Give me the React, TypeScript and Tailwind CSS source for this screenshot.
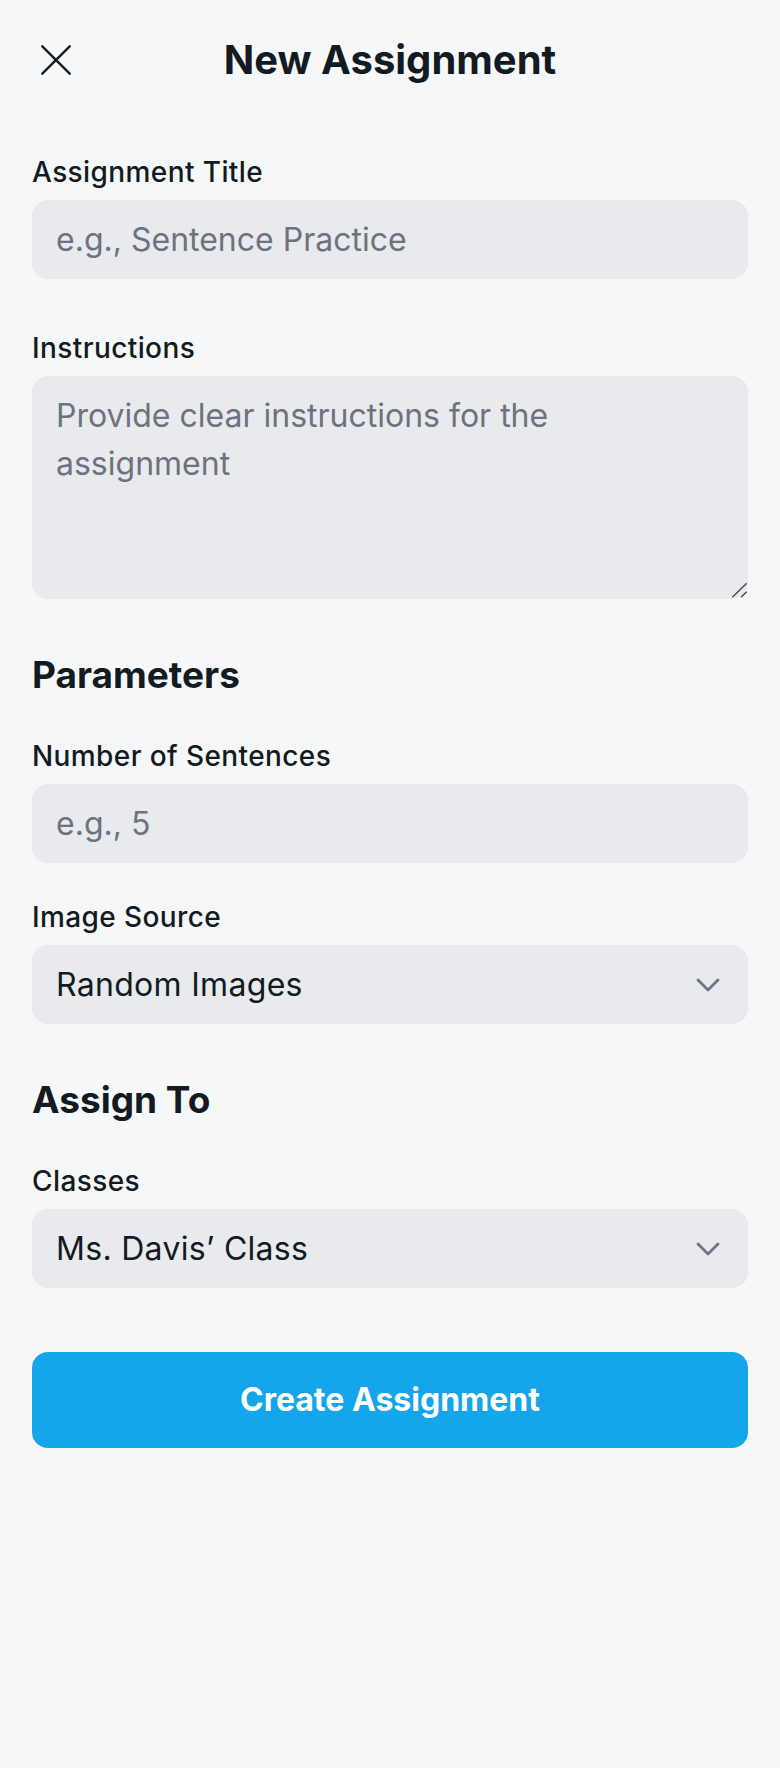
import React from "react";

function Label({ children }: { children: React.ReactNode }) {
  return (
    <label className="block text-[28px] leading-[40px] font-medium tracking-[0.4px] text-[#111b21] mb-2">
      {children}
    </label>
  );
}

function Chevron() {
  return (
    <svg
      className="pointer-events-none absolute right-[28px] top-1/2 -translate-y-1/2"
      width="24"
      height="14"
      viewBox="0 0 24 14"
      fill="none"
    >
      <polyline
        points="2,2 12,12 22,2"
        stroke="#6b7280"
        strokeWidth="2.8"
        strokeLinecap="round"
        strokeLinejoin="round"
      />
    </svg>
  );
}

function Select({ value, options }: { value: string; options: string[] }) {
  return (
    <div className="relative">
      <select
        defaultValue={value}
        className="appearance-none w-full h-[79px] rounded-2xl bg-[#e9eaed] pl-6 pr-16 text-[32px] tracking-[0.3px] text-[#111b21] outline-none"
      >
        {options.map((o) => (
          <option key={o} value={o}>
            {o}
          </option>
        ))}
      </select>
      <Chevron />
    </div>
  );
}

export default function App() {
  return (
    <div className="min-h-[1768px] w-full bg-[#f6f7f9] [font-family:Inter,'Noto_Sans',sans-serif] text-[#111b21]">
      <header className="grid grid-cols-[1fr_auto_1fr] items-center h-[120px] px-8">
        <button className="justify-self-start ml-[9px] w-[30px] h-[30px]" aria-label="Close">
          <svg width="30" height="30" viewBox="0 0 30 30" fill="none">
            <path
              d="M1.3 1.3 L28.7 28.7 M28.7 1.3 L1.3 28.7"
              stroke="#111b21"
              strokeWidth="2.4"
              strokeLinecap="round"
            />
          </svg>
        </button>
        <h1 className="text-[40px] leading-[56px] font-bold text-[#111b21]">New Assignment</h1>
        <div />
      </header>

      <main className="px-8 pt-8 flex flex-col">
        <div>
          <Label>Assignment Title</Label>
          <input
            type="text"
            placeholder="e.g., Sentence Practice"
            className="w-full h-[79px] rounded-2xl bg-[#e9eaed] px-6 text-[32px] text-[#111b21] placeholder:text-[#6b7280] outline-none"
          />
        </div>

        <div className="mt-[49px]">
          <Label>Instructions</Label>
          <div className="relative">
            <textarea
              placeholder="Provide clear instructions for the assignment"
              className="block w-full h-[223px] resize-none rounded-2xl bg-[#e9eaed] px-6 pt-4 text-[32px] leading-[48px] text-[#111b21] placeholder:text-[#6b7280] outline-none"
            />
            <svg
              className="pointer-events-none absolute right-[1px] bottom-[1px]"
              width="16"
              height="16"
              viewBox="0 0 16 16"
              fill="none"
            >
              <path d="M1.3 15.3 L15.7 1.3 M10 15.3 L15.7 9.7" stroke="#4a4a4a" strokeWidth="1.4" />
            </svg>
          </div>
        </div>

        <h2 className="mt-[52px] text-[37px] leading-[48px] font-bold text-[#111b21]">Parameters</h2>

        <div className="mt-[37px]">
          <Label>Number of Sentences</Label>
          <input
            type="text"
            placeholder="e.g., 5"
            className="w-full h-[79px] rounded-2xl bg-[#e9eaed] px-6 text-[32px] text-[#111b21] placeholder:text-[#6b7280] outline-none"
          />
        </div>

        <div className="mt-[34px]">
          <Label>Image Source</Label>
          <Select value="Random Images" options={["Random Images", "Uploaded Images"]} />
        </div>

        <h2 className="mt-[52px] text-[37px] leading-[48px] font-bold text-[#111b21]">Assign To</h2>

        <div className="mt-[37px]">
          <Label>Classes</Label>
          <Select value="Ms. Davis’ Class" options={["Ms. Davis’ Class", "Mr. Lee’s Class"]} />
        </div>

        <button className="mt-[64px] h-[96px] w-full rounded-2xl bg-[#15a5ea] text-white text-[32px] font-bold">
          Create Assignment
        </button>
      </main>
    </div>
  );
}
